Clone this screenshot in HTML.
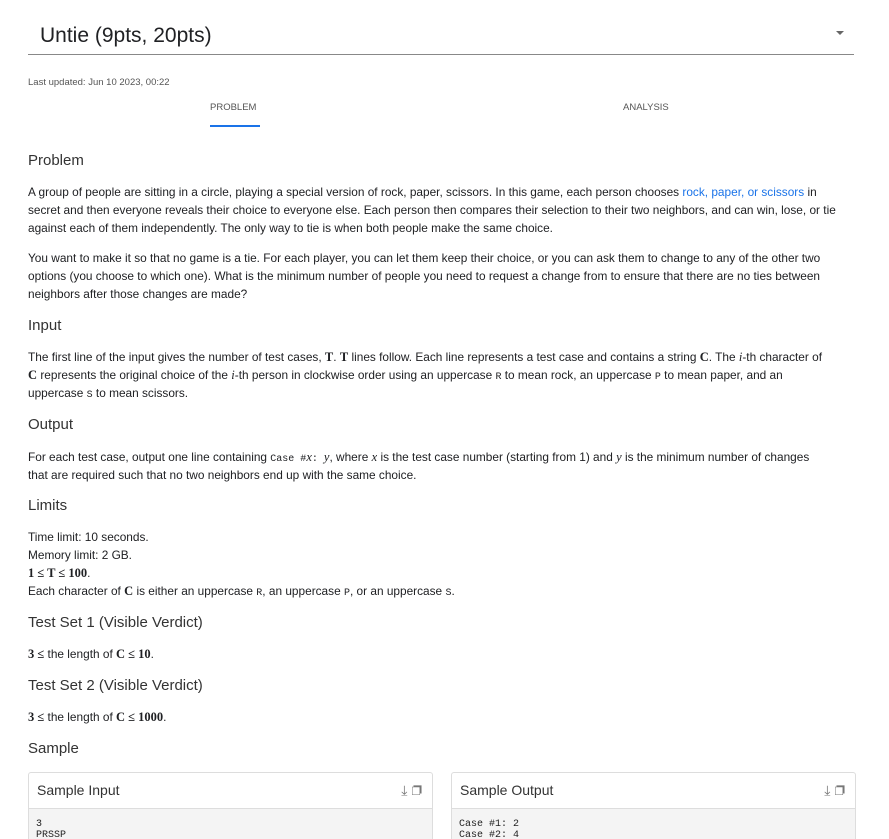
<!DOCTYPE html>
<html style="overflow:hidden;height:839px"><head><meta charset="utf-8"><style>
body{margin:0;width:889px;height:839px;overflow:hidden;background:#fff;font-family:"Liberation Sans",sans-serif;color:#202124;position:relative}
.a{position:absolute;left:28px;white-space:nowrap}
.t{font-size:11.85px;line-height:18px;color:#202124}
.h{font-size:15px;color:#333}
.m{font-family:"Liberation Mono",monospace;font-size:10px;line-height:10px}
.b{font-family:"Liberation Serif",serif;font-weight:bold;font-size:12.5px;line-height:10px}
.i{font-family:"Liberation Serif",serif;font-style:italic;font-size:12.5px;line-height:10px}
.box{position:absolute;top:772px;height:70px;border:1px solid #ddd;border-radius:3px;width:403px;overflow:hidden}
.bh{height:35px;border-bottom:1px solid #ddd;font-size:14px;line-height:35px;padding-left:8px;color:#333;position:relative}
.bb{background:#f4f4f4;height:50px;font-family:"Liberation Mono",monospace;font-size:10px;line-height:11px;padding:10px 7px;color:#222}
.ic{position:absolute;right:10px;top:0;font-size:14px;color:#777}
</style></head><body>
<div class="a" style="left:40px;top:24px;font-size:21px;color:#202124">Untie (9pts, 20pts)</div>
<div style="position:absolute;left:836px;top:31px;width:0;height:0;border-left:4px solid transparent;border-right:4px solid transparent;border-top:4px solid #666"></div>
<div style="position:absolute;left:28px;top:54px;width:826px;height:1px;background:#888"></div>
<div class="a" style="top:77px;font-size:9.5px;color:#555">Last updated: Jun 10 2023, 00:22</div>
<div class="a" style="left:210px;top:102px;font-size:9.5px;color:#555">PROBLEM</div>
<div style="position:absolute;left:210px;top:125px;width:50px;height:2px;background:#1a73e8"></div>
<div class="a" style="left:623px;top:102px;font-size:9.5px;color:#555">ANALYSIS</div>

<div class="a h" style="top:152px">Problem</div>
<div class="a t" style="top:183px">A group of people are sitting in a circle, playing a special version of rock, paper, scissors. In this game, each person chooses <span style="color:#1a73e8">rock, paper, or scissors</span> in<br>secret and then everyone reveals their choice to everyone else. Each person then compares their selection to their two neighbors, and can win, lose, or tie<br>against each of them independently. The only way to tie is when both people make the same choice.</div>
<div class="a t" style="top:249px">You want to make it so that no game is a tie. For each player, you can let them keep their choice, or you can ask them to change to any of the other two<br>options (you choose to which one). What is the minimum number of people you need to request a change from to ensure that there are no ties between<br>neighbors after those changes are made?</div>
<div class="a h" style="top:317px">Input</div>
<div class="a t" style="top:348px">The first line of the input gives the number of test cases, <span class="b">T</span>. <span class="b">T</span> lines follow. Each line represents a test case and contains a string <span class="b">C</span>. The <span class="i">i</span>-th character of<br><span class="b">C</span> represents the original choice of the <span class="i">i</span>-th person in clockwise order using an uppercase <span class="m">R</span> to mean rock, an uppercase <span class="m">P</span> to mean paper, and an<br>uppercase <span class="m">S</span> to mean scissors.</div>
<div class="a h" style="top:416px">Output</div>
<div class="a t" style="top:448px">For each test case, output one line containing <span class="m">Case #</span><span class="i">x</span><span class="m">: </span><span class="i">y</span>, where <span class="i">x</span> is the test case number (starting from 1) and <span class="i">y</span> is the minimum number of changes<br>that are required such that no two neighbors end up with the same choice.</div>
<div class="a h" style="top:497px">Limits</div>
<div class="a t" style="top:528px">Time limit: 10 seconds.<br>Memory limit: 2 GB.<br><span class="b">1 ≤ T ≤ 100</span>.<br>Each character of <span class="b">C</span> is either an uppercase <span class="m">R</span>, an uppercase <span class="m">P</span>, or an uppercase <span class="m">S</span>.</div>
<div class="a h" style="top:614px">Test Set 1 (Visible Verdict)</div>
<div class="a t" style="top:645px"><span class="b">3 ≤</span> the length of <span class="b">C ≤ 10</span>.</div>
<div class="a h" style="top:677px">Test Set 2 (Visible Verdict)</div>
<div class="a t" style="top:708px"><span class="b">3 ≤</span> the length of <span class="b">C ≤ 1000</span>.</div>
<div class="a h" style="top:740px">Sample</div>

<div class="box" style="left:28px"><div class="bh">Sample Input<span class="ic">⤓ ❐</span></div><div class="bb">3<br>PRSSP</div></div>
<div class="box" style="left:451px"><div class="bh">Sample Output<span class="ic">⤓ ❐</span></div><div class="bb">Case #1: 2<br>Case #2: 4</div></div>
</body></html>
